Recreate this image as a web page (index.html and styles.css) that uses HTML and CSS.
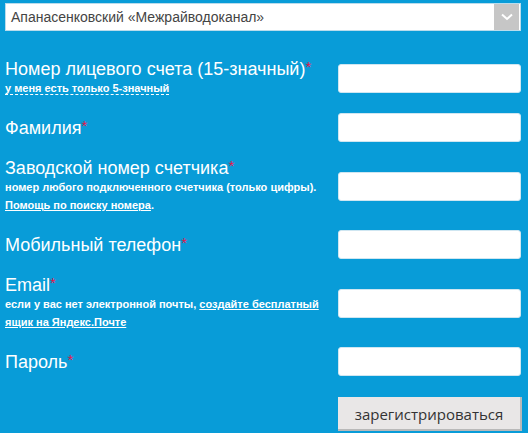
FILE: index.html
```html
<!DOCTYPE html>
<html lang="ru">
<head>
    <meta charset="UTF-8">
    <meta name="viewport" content="width=device-width, initial-scale=1.0">
    <title>Регистрация</title>
    <link rel="stylesheet" href="styles.css">
</head>
<body>
    <div class="form-wrap">
        <!-- Выбор поставщика -->
        <div class="select">
            <span class="select-value">Апанасенковский «Межрайводоканал»</span>
            <span class="select-arrow">
                <svg width="12" height="8" viewBox="0 0 12 8"><path d="M1 1.5 L6 6 L11 1.5" fill="none" stroke="#fff" stroke-width="2"/></svg>
            </span>
        </div>

        <form class="reg-form">
            <div class="label">
                <div class="title">Номер лицевого счета (15-значный)<span class="req">*</span></div>
                <div class="hint"><a href="#" class="dashed">у меня есть только 5-значный</a></div>
            </div>
            <input type="text" class="field">

            <div class="label">
                <div class="title">Фамилия<span class="req">*</span></div>
            </div>
            <input type="text" class="field">

            <div class="label">
                <div class="title">Заводской номер счетчика<span class="req">*</span></div>
                <div class="hint">номер любого подключенного счетчика (только цифры). <a href="#">Помощь по поиску номера</a>.</div>
            </div>
            <input type="text" class="field">

            <div class="label">
                <div class="title">Мобильный телефон<span class="req">*</span></div>
            </div>
            <input type="text" class="field">

            <div class="label">
                <div class="title">Email<span class="req">*</span></div>
                <div class="hint">если у вас нет электронной почты, <a href="#">создайте бесплатный ящик на Яндекс.Почте</a></div>
            </div>
            <input type="text" class="field">

            <div class="label">
                <div class="title">Пароль<span class="req">*</span></div>
            </div>
            <input type="password" class="field">

            <div></div>
            <button type="submit" class="submit">зарегистрироваться</button>
        </form>
    </div>
</body>
</html>
```

FILE: styles.css
```css
body {
    margin: 0;
    background: #089cd8;
    font-family: 'Liberation Sans', Arial, sans-serif;
    color: #fff;
}

.form-wrap {
    width: 516px;
    padding: 3px 0 0 5px;
}

/* Выпадающий список */
.select {
    display: flex;
    align-items: stretch;
    height: 26px;
    border: 1px solid #b9dcec;
    background: #fff;
}

.select-value {
    flex: 1;
    padding-left: 5px;
    font-size: 14px;
    line-height: 26px;
    color: #444;
}

.select-arrow {
    width: 25px;
    margin: 0 1px 0 0;
    background: #c6c6c6;
    display: flex;
    align-items: center;
    justify-content: center;
}

/* Форма */
.reg-form {
    display: grid;
    grid-template-columns: 1fr 183px;
    column-gap: 8px;
    row-gap: 16px;
    align-items: center;
    margin-top: 28px;
}

.title {
    font-size: 18px;
    line-height: 20px;
}

.req {
    color: #e5174a;
    font-size: 15px;
    vertical-align: top;
    line-height: 15px;
}

.hint {
    font-size: 11px;
    font-weight: bold;
    line-height: 18px;
}

.hint a {
    color: #fff;
}

.hint a.dashed {
    text-decoration: none;
    border-bottom: 1px dashed #fff;
}

.field {
    box-sizing: border-box;
    height: 29px;
    width: 183px;
    margin: 0;
    border: 1px solid #cfe6f1;
    border-radius: 3px;
    background: #fff;
}

.submit {
    box-sizing: border-box;
    width: 184px;
    height: 34px;
    margin-top: 5px;
    border: none;
    border-right: 2px solid #b9b9b9;
    border-bottom: 2px solid #b9b9b9;
    background: #e9e7e7;
    color: #333;
    font-family: 'Open Sans', sans-serif;
    font-size: 15px;
    padding: 2px 0 0;
}
```
